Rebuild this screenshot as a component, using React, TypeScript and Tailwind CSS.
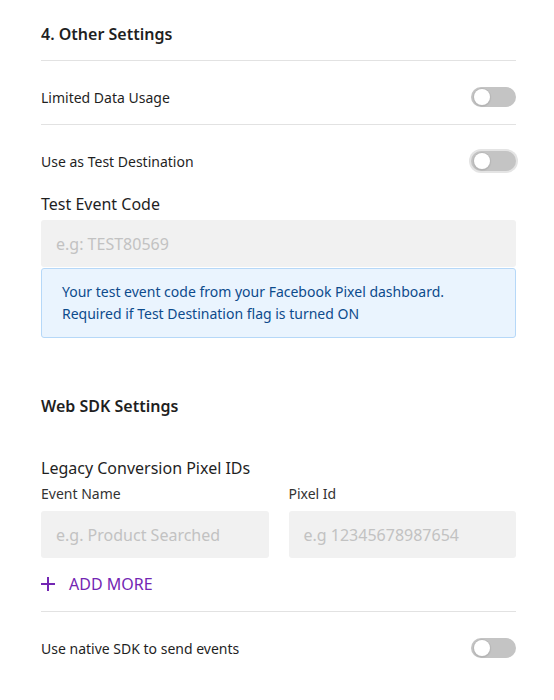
import React from 'react';

function Toggle({ focused = false }: { focused?: boolean }) {
  return (
    <div
      className={
        'relative h-[20px] w-[45px] rounded-full bg-[#c4c4c4] ' +
        (focused ? 'shadow-[0_0_0_2px_#e4e4e4]' : '')
      }
    >
      <div className="absolute left-[3px] top-[2px] h-[16px] w-[16px] rounded-full bg-white shadow-[0_0_0_1px_#b8b8b8,0_1px_2px_rgba(0,0,0,0.2)]" />
    </div>
  );
}

function ToggleRow({ label, focused }: { label: string; focused?: boolean }) {
  return (
    <div className="flex h-[20px] items-center justify-between">
      <span className="text-[14px] text-[#1f1f1f]">{label}</span>
      <Toggle focused={focused} />
    </div>
  );
}

function Input({ placeholder }: { placeholder: string }) {
  return (
    <div className="flex h-[47px] items-center rounded-[3px] bg-[#f1f1f1] px-[15px] text-[16px] text-[#c2c2c2]">
      {placeholder}
    </div>
  );
}

export default function App() {
  return (
    <div
      className="min-h-[700px] bg-white pl-[41px] pr-[38px] pt-[22px] text-[#1f1f1f]"
      style={{ fontFamily: '"Noto Sans", "Open Sans", sans-serif' }}
    >
      <h2 className="text-[16px] font-semibold leading-[24px]">4. Other Settings</h2>
      <div className="mt-[14px] border-t border-[#e2e2e2]" />
      <div className="pb-[17px] pt-[26px]">
        <ToggleRow label="Limited Data Usage" />
      </div>
      <div className="border-t border-[#e2e2e2]" />
      <div className="pt-[26px]">
        <ToggleRow label="Use as Test Destination" focused />
      </div>

      <div className="mt-[21px] text-[16px] leading-[24px]">Test Event Code</div>
      <div className="mt-[4px]">
        <Input placeholder="e.g: TEST80569" />
      </div>
      <div className="mt-[1px] rounded-[3px] border border-[#b6d8f8] bg-[#eaf4fe] px-[20px] py-[12px] text-[14px] leading-[22px] text-[#0d4b8c]">
        Your test event code from your Facebook Pixel dashboard.
        <br />
        Required if Test Destination flag is turned ON
      </div>

      <h2 className="mt-[56px] text-[16px] font-semibold leading-[24px]">Web SDK Settings</h2>

      <div className="mt-[38px] text-[16px] leading-[24px]">Legacy Conversion Pixel IDs</div>
      <div className="mt-[4px] grid grid-cols-2 gap-[20px]">
        <div>
          <div className="text-[14px] leading-[20px] text-[#333]">Event Name</div>
          <div className="mt-[7px]">
            <Input placeholder="e.g. Product Searched" />
          </div>
        </div>
        <div>
          <div className="text-[14px] leading-[20px] text-[#333]">Pixel Id</div>
          <div className="mt-[7px]">
            <Input placeholder="e.g 12345678987654" />
          </div>
        </div>
      </div>

      <div className="mt-[14px] flex items-center gap-[14px] text-[#7326b3]">
        <svg width="14" height="14" viewBox="0 0 14 14" fill="none">
          <path d="M7 0v14M0 7h14" stroke="currentColor" strokeWidth="2" />
        </svg>
        <span className="text-[16px] leading-[24px]">ADD MORE</span>
      </div>
      <div className="mt-[15px] border-t border-[#e2e2e2]" />
      <div className="flex h-[72px] items-center justify-between">
        <span className="text-[14px]">Use native SDK to send events</span>
        <Toggle />
      </div>
    </div>
  );
}
